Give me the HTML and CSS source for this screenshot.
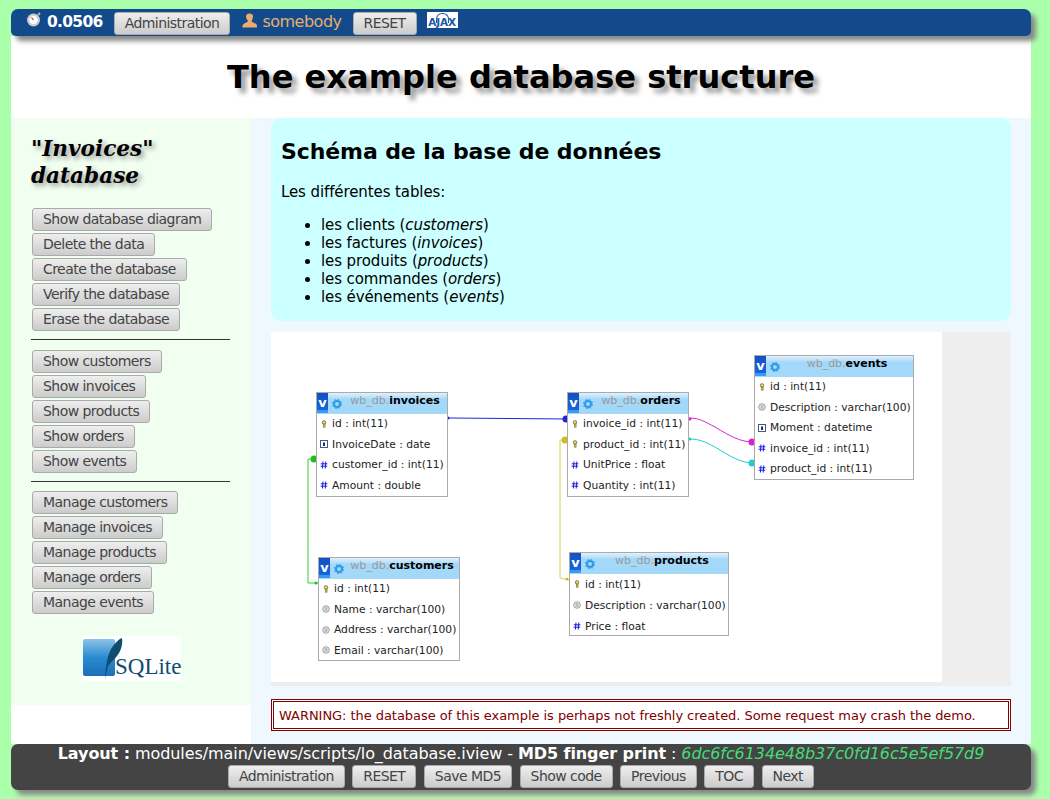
FILE: index.html
```html
<!DOCTYPE html>
<html>
<head>
	<meta charset="utf-8">
	<title>The example database structure</title>
	<link rel="stylesheet" href="styles.css">
</head>
<body>
	<svg class="defs" width="0" height="0">
		<symbol id="i-key" viewBox="0 0 8 10"><circle cx="4" cy="3" r="2.2" fill="#e8d878" stroke="#6a6a30" stroke-width="1"/><rect x="3" y="5" width="2.4" height="4" fill="#c8b040" stroke="#6a6a30" stroke-width=".6"/></symbol>
		<symbol id="i-cal" viewBox="0 0 8 8"><rect x=".5" y=".5" width="7" height="7" fill="#fff" stroke="#3a5a90"/><rect x="3" y="2.5" width="2" height="3.5" fill="#333"/></symbol>
		<symbol id="i-txt" viewBox="0 0 8 8"><circle cx="4" cy="4" r="3.3" fill="#eee" stroke="#888" stroke-width=".8"/><path d="M2.5 3h3M2.5 5h3" stroke="#777" stroke-width=".8"/></symbol>
		<symbol id="i-num" viewBox="0 0 8 8"><path d="M3 .5 2.400 7.500M5.800 .5 5.200 7.500M.8 2.800h6.600M.6 5.200h6.600" stroke="#1a1ae0" stroke-width="1" fill="none"/></symbol>
		<symbol id="i-gear" viewBox="0 0 10 10"><circle cx="5" cy="5" r="3" fill="none" stroke="#2a9ae8" stroke-width="2"/><circle cx="5" cy="5" r="4.600" fill="none" stroke="#2a9ae8" stroke-width="1" stroke-dasharray="1.800 1.800"/></symbol>
	</svg>

	<div class="topbar">
		<svg class="watch" width="16" height="15" viewBox="0 0 16 15"><circle cx="7.500" cy="8" r="6.500" fill="#ccc"/><circle cx="7.500" cy="8" r="4.200" fill="#fff"/><path d="M7.500 8 5.500 5.500" stroke="#a33" stroke-width="1.200"/><path d="M12 3l2-2" stroke="#bbb" stroke-width="2"/></svg>
		<span class="chrono">0.0506</span>
		<a class="btn top-first" href="#">Administration</a>
		<svg class="person" width="15" height="15" viewBox="0 0 15 15"><path d="M4 3.500C4 1.500 5.500 .5 7.500 .5s3.500 1 3.500 3-1 3.500-1.500 4.500c0 1.500 5.500 2 5.500 5v1.500H.5V13c0-3 5.500-3.500 5.500-5C5.500 7 4 5.500 4 3.500z" fill="#e8ad6c"/></svg>
		<span class="user">somebody</span>
		<a class="btn" href="#">RESET</a>
		<span class="ajax">AJAX</span>
	</div>

	<h1 class="title">The example database structure</h1>

	<div class="columns">
		<div class="side">
			<h2 class="side-title">"Invoices" database</h2>
			<div class="side-group">
				<a class="btn" href="#">Show database diagram</a>
				<a class="btn" href="#">Delete the data</a>
				<a class="btn" href="#">Create the database</a>
				<a class="btn" href="#">Verify the database</a>
				<a class="btn" href="#">Erase the database</a>
			</div>
			<hr>
			<div class="side-group">
				<a class="btn" href="#">Show customers</a>
				<a class="btn" href="#">Show invoices</a>
				<a class="btn" href="#">Show products</a>
				<a class="btn" href="#">Show orders</a>
				<a class="btn" href="#">Show events</a>
			</div>
			<hr class="hr-tight">
			<div class="side-group">
				<a class="btn" href="#">Manage customers</a>
				<a class="btn" href="#">Manage invoices</a>
				<a class="btn" href="#">Manage products</a>
				<a class="btn" href="#">Manage orders</a>
				<a class="btn" href="#">Manage events</a>
			</div>
			<div class="sqlite">
				<svg width="48" height="45" viewBox="0 0 48 45">
					<defs><linearGradient id="sq" x1="0" y1="0" x2="0" y2="1"><stop offset="0" stop-color="#8cc4e8"/><stop offset=".5" stop-color="#2a8ad0"/><stop offset="1" stop-color="#1a70b8"/></linearGradient></defs>
					<rect x="0" y="3" width="32" height="37" rx="2" fill="url(#sq)"/>
					<path d="M22 43C23 30 24 18 30 10 33 6 36 3 39 2 40 8 38 15 34 20 30 25 27 27 25 30 24 34 23 38 22 43z" fill="#0f4c6e"/>
				</svg>
				<span class="sqlite-name">SQLite</span>
			</div>
		</div>

		<div class="main">
			<div class="note">
				<h2>Schéma de la base de données</h2>
				<p>Les différentes tables:</p>
				<ul>
					<li>les clients (<em>customers</em>)</li>
					<li>les factures (<em>invoices</em>)</li>
					<li>les produits (<em>products</em>)</li>
					<li>les commandes (<em>orders</em>)</li>
					<li>les événements (<em>events</em>)</li>
				</ul>
			</div>

			<div class="diagram">
				<div class="canvas">
					<svg class="links" width="671" height="350" viewBox="271 332 671 350">
						<path d="M448 418 567 419" stroke="#2222dd" fill="none"/>
						<circle cx="448" cy="418" r="1.500" fill="#2222dd"/><circle cx="566" cy="419" r="3.500" fill="#2222dd"/>
						<path d="M316 459H308V583H318" stroke="#33cc33" fill="none"/>
						<circle cx="314" cy="459" r="3.500" fill="#22bb22"/><circle cx="316" cy="583" r="1.500" fill="#22bb22"/>
						<path d="M567 440H560V578L569 580" stroke="#d8d050" fill="none"/>
						<circle cx="565" cy="440" r="3.500" fill="#c8c020"/><circle cx="567" cy="579" r="1.500" fill="#c8c020"/>
						<path d="M689 418C700 418 705 422 715 427 730 436 740 442 754 442" stroke="#dd22cc" fill="none"/>
						<circle cx="690" cy="419" r="1.500" fill="#dd22cc"/><circle cx="752" cy="442" r="3.500" fill="#dd22cc"/>
						<path d="M689 439C700 439 705 442 715 447 730 456 740 463 754 463" stroke="#22cccc" fill="none"/>
						<circle cx="690" cy="439" r="1.500" fill="#22cccc"/><circle cx="752" cy="463" r="3.500" fill="#22cccc"/>
					</svg>

					<div class="tbl tbl-invoices">
						<div class="tbl-head"><span class="tbl-v">v</span><svg class="gear"><use href="#i-gear"/></svg><span class="tbl-name"><i>wb_db.</i><b>invoices</b></span></div>
						<div class="row"><svg class="ico"><use href="#i-key"/></svg>id : int(11)</div>
						<div class="row"><svg class="ico"><use href="#i-cal"/></svg>InvoiceDate : date</div>
						<div class="row"><svg class="ico"><use href="#i-num"/></svg>customer_id : int(11)</div>
						<div class="row"><svg class="ico"><use href="#i-num"/></svg>Amount : double</div>
					</div>

					<div class="tbl tbl-customers">
						<div class="tbl-head"><span class="tbl-v">v</span><svg class="gear"><use href="#i-gear"/></svg><span class="tbl-name"><i>wb_db.</i><b>customers</b></span></div>
						<div class="row"><svg class="ico"><use href="#i-key"/></svg>id : int(11)</div>
						<div class="row"><svg class="ico"><use href="#i-txt"/></svg>Name : varchar(100)</div>
						<div class="row"><svg class="ico"><use href="#i-txt"/></svg>Address : varchar(100)</div>
						<div class="row"><svg class="ico"><use href="#i-txt"/></svg>Email : varchar(100)</div>
					</div>

					<div class="tbl tbl-orders">
						<div class="tbl-head"><span class="tbl-v">v</span><svg class="gear"><use href="#i-gear"/></svg><span class="tbl-name"><i>wb_db.</i><b>orders</b></span></div>
						<div class="row"><svg class="ico"><use href="#i-key"/></svg>invoice_id : int(11)</div>
						<div class="row"><svg class="ico"><use href="#i-key"/></svg>product_id : int(11)</div>
						<div class="row"><svg class="ico"><use href="#i-num"/></svg>UnitPrice : float</div>
						<div class="row"><svg class="ico"><use href="#i-num"/></svg>Quantity : int(11)</div>
					</div>

					<div class="tbl tbl-events">
						<div class="tbl-head"><span class="tbl-v">v</span><svg class="gear"><use href="#i-gear"/></svg><span class="tbl-name"><i>wb_db.</i><b>events</b></span></div>
						<div class="row"><svg class="ico"><use href="#i-key"/></svg>id : int(11)</div>
						<div class="row"><svg class="ico"><use href="#i-txt"/></svg>Description : varchar(100)</div>
						<div class="row"><svg class="ico"><use href="#i-cal"/></svg>Moment : datetime</div>
						<div class="row"><svg class="ico"><use href="#i-num"/></svg>invoice_id : int(11)</div>
						<div class="row"><svg class="ico"><use href="#i-num"/></svg>product_id : int(11)</div>
					</div>

					<div class="tbl tbl-products">
						<div class="tbl-head"><span class="tbl-v">v</span><svg class="gear"><use href="#i-gear"/></svg><span class="tbl-name"><i>wb_db.</i><b>products</b></span></div>
						<div class="row"><svg class="ico"><use href="#i-key"/></svg>id : int(11)</div>
						<div class="row"><svg class="ico"><use href="#i-txt"/></svg>Description : varchar(100)</div>
						<div class="row"><svg class="ico"><use href="#i-num"/></svg>Price : float</div>
					</div>
				</div>
			</div>

			<div class="warning">WARNING: the database of this example is perhaps not freshly created. Some request may crash the demo.</div>
		</div>
	</div>

	<div class="footer">
		<div class="footer-line"><b>Layout :</b> modules/main/views/scripts/lo_database.iview - <b>MD5 finger print</b> : <em>6dc6fc6134e48b37c0fd16c5e5ef57d9</em></div>
		<div class="footer-btns">
			<a class="btn" href="#">Administration</a>
			<a class="btn" href="#">RESET</a>
			<a class="btn" href="#">Save MD5</a>
			<a class="btn" href="#">Show code</a>
			<a class="btn" href="#">Previous</a>
			<a class="btn" href="#">TOC</a>
			<a class="btn" href="#">Next</a>
		</div>
	</div>
</body>
</html>
```

FILE: styles.css
```css
*{margin:0;padding:0;box-sizing:border-box;}
html,body{height:799px;overflow:hidden;}
body{
	background-color:#aaffaa;
	padding:9px 19px 0 11px;
	font-family:"DejaVu Sans",sans-serif;
	font-size:15px;
	letter-spacing:-.1px;
	color:#000;
}
.defs{position:absolute;}
.btn{
	display:inline-block;
	height:23px;
	line-height:21px;
	padding:0 10px;
	font-size:14px;
	letter-spacing:-.55px;
	color:#444;
	text-decoration:none;
	white-space:nowrap;
	background:linear-gradient(#eeeeee,#cccccc);
	border:1px solid #aaaaaa;
	border-radius:3px;
}

/* top bar */
.topbar{
	height:27px;
	display:flex;
	align-items:flex-start;
	padding:3px 0 0 15px;
	background-color:#134a8c;
	border-radius:7px 7px 5px 5px;
	box-shadow:5px 5px 5px #888888;
	position:relative;
}
.watch{margin-right:5px;}
.chrono{font-size:15.5px;letter-spacing:-.7px;font-weight:bold;color:#fff;line-height:21px;}
.top-first{margin:0 12px 0 11px;}
.person{margin:1px 5px 0 0;}
.user{font-size:16px;letter-spacing:-.5px;color:#e8ad6c;line-height:20px;margin-right:11px;}
.ajax{
	position:relative;
	width:31px;
	height:16px;
	margin-left:10px;
	background-color:#fff;
	color:#1a5aa8;
	font-size:10.5px;
	font-weight:bold;
	line-height:21px;
	text-align:center;
	overflow:hidden;
}
.ajax::before{
	content:"";
	position:absolute;
	left:9px;
	top:1px;
	width:11px;
	height:9px;
	border:1px solid #1a5aa8;
	border-bottom:0;
	border-radius:6px 6px 0 0;
}

.title{
	height:82px;
	background-color:#fff;
	text-align:center;
	font-size:32.1px;
	letter-spacing:0;
	line-height:82px;
	text-shadow:5px 5px 5px #999999;
}

.columns{
	display:flex;
	height:626px;
	background-color:#fff;
}

/* left column */
.side{
	width:240px;
	height:587px;
	padding:17px 21px 0 20px;
	background-color:#f0fff0;
}
.side-title{
	font-family:"DejaVu Serif",serif;
	font-size:21.6px;
	font-style:italic;
	letter-spacing:0;
	line-height:27px;
	text-shadow:3px 3px 5px #999999;
	margin-bottom:19px;
}
.side-group{
	display:flex;
	flex-direction:column;
	align-items:flex-start;
	gap:2px;
	padding-left:1px;
}
.side hr{
	border:0;
	border-top:1px solid #333;
	margin:8px 0 10px;
}
.side .hr-tight{margin-bottom:9px;}
.sqlite{
	width:98px;
	height:45px;
	margin:22px 0 0 52px;
	background-color:#fff;
	position:relative;
}
.sqlite-name{
	position:absolute;
	left:32px;
	bottom:1px;
	font-family:"Liberation Serif",serif;
	font-size:23px;
	letter-spacing:0;
	color:#0f4c6e;
}

/* main column */
.main{
	width:780px;
	padding:0 20px;
	background-color:#f0f8ff;
}
.note{
	height:203px;
	padding:21px 10px 0;
	background-color:#ccffff;
	border-radius:10px;
}
.note h2{font-size:22px;letter-spacing:-.1px;line-height:26px;margin-bottom:18px;}
.note p{line-height:18px;margin-bottom:15px;}
.note ul{padding-left:40px;}
.note li{line-height:18px;}

.diagram{
	margin-top:11px;
	height:354px;
	background-color:#eeeeee;
}
.canvas{
	position:relative;
	width:671px;
	height:350px;
	background-color:#fff;
}
.links{position:absolute;left:0;top:0;}
.tbl{
	position:absolute;
	background-color:#fff;
	border:1px solid #aaaaaa;
	font-size:10.7px;
	letter-spacing:0;
	color:#222;
}
.tbl-invoices{left:45px;top:60px;width:132px;}
.tbl-customers{left:47px;top:225px;width:142px;height:104px;}
.tbl-orders{left:296px;top:60px;width:122px;}
.tbl-events{left:483px;top:23px;width:160px;}
.tbl-products{left:298px;top:220px;width:160px;height:84px;}
.tbl-head{
	position:relative;
	height:20.5px;
	padding-left:26px;
	font-size:11px;
	text-align:center;
	background:linear-gradient(#e0f2ff,#a4d8f8 30%,#a4d8f8);
	white-space:nowrap;
}
.tbl-products .row{height:21px;}
.tbl-v{
	position:absolute;
	left:0;
	top:0;
	width:11px;
	height:20px;
	background:linear-gradient(#1450c0,#1466e0 85%,#3a9af0 85%);
	color:#fff;
	font-weight:bold;
	font-size:13px;
	line-height:20px;
	text-align:center;
}
.gear{position:absolute;left:15px;top:6px;width:10px;height:10px;}
.tbl-name{line-height:16px;}
.tbl-name i{font-style:normal;color:#999999;}
.tbl-name b{color:#000;}
.row{
	display:flex;
	align-items:center;
	height:20.5px;
	white-space:nowrap;
}
.ico{width:8px;height:8px;margin:0 4px 0 3px;flex:none;}

.warning{
	margin-top:13px;
	height:32px;
	padding-left:5px;
	line-height:27px;
	font-size:13px;
	letter-spacing:-.05px;
	color:#800000;
	background-color:#fff;
	border:3px double #800000;
}

/* footer */
.footer{
	position:relative;
	height:46px;
	background-color:#444444;
	border-radius:7px;
	box-shadow:5px 5px 5px #888888;
	text-align:center;
	color:#fff;
	font-size:16px;
	letter-spacing:-.08px;
}
.footer-line{height:21px;line-height:19px;white-space:nowrap;}
.footer-line em{color:#44dd77;}
.footer-btns{display:flex;justify-content:center;gap:7.5px;}
```
